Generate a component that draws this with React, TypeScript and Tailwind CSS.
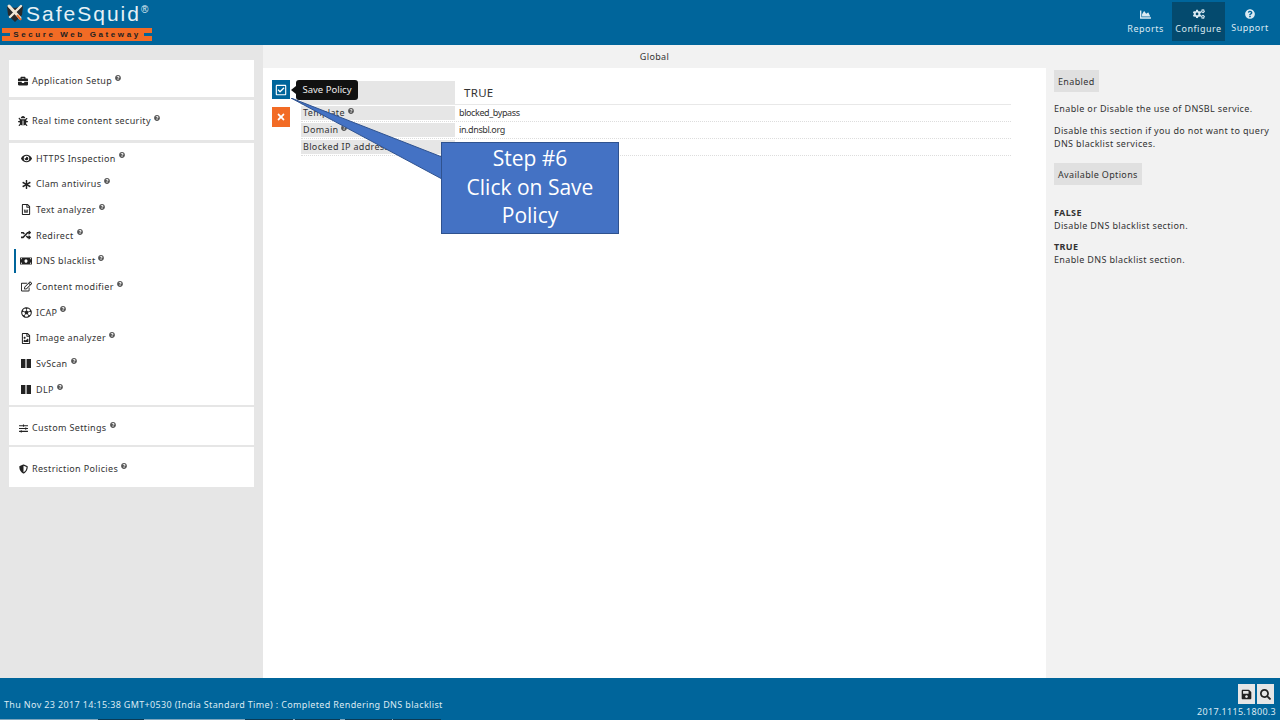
import type { ReactNode } from "react";
import {
  FaBriefcase,
  FaBug,
  FaEye,
  FaAsterisk,
  FaRegFileWord,
  FaRandom,
  FaMoneyBill,
  FaRegEdit,
  FaRegFutbol,
  FaRegFileImage,
  FaSlidersH,
  FaShieldAlt,
  FaChartArea,
  FaCogs,
  FaQuestionCircle,
  FaSave,
  FaSearch,
  FaRegCheckSquare,
  FaTimes,
} from "react-icons/fa";

const font = "font-['Noto_Sans',sans-serif]";

function Info({ className = "" }: { className?: string }) {
  return <FaQuestionCircle className={`inline-block w-[6px] h-[6px] shrink-0 text-[#555] ${className}`} />;
}

function Bars() {
  return (
    <svg viewBox="0 0 10 9" className="w-[10px] h-[9px] fill-[#222]">
      <rect x="0" y="0" width="4.4" height="9" />
      <rect x="5.6" y="0" width="4.4" height="9" />
    </svg>
  );
}

const subItems: { label: string; icon: ReactNode; active?: boolean }[] = [
  { label: "HTTPS Inspection", icon: <FaEye className="w-[11px] h-[11px]" /> },
  { label: "Clam antivirus", icon: <FaAsterisk className="w-[9px] h-[9px]" /> },
  { label: "Text analyzer", icon: <FaRegFileWord className="w-[10px] h-[11px]" /> },
  { label: "Redirect", icon: <FaRandom className="w-[10px] h-[10px]" /> },
  { label: "DNS blacklist", icon: <FaMoneyBill className="w-[12px] h-[12px]" />, active: true },
  { label: "Content modifier", icon: <FaRegEdit className="w-[11px] h-[11px]" /> },
  { label: "ICAP", icon: <FaRegFutbol className="w-[11px] h-[11px]" /> },
  { label: "Image analyzer", icon: <FaRegFileImage className="w-[10px] h-[11px]" /> },
  { label: "SvScan", icon: <Bars /> },
  { label: "DLP", icon: <Bars /> },
];

function TopCard({ icon, label, className }: { icon: ReactNode; label: string; className: string }) {
  return (
    <div className={`bg-white flex items-center pl-[9px] text-[#333] ${className}`}>
      <span className="w-[10px] flex justify-center text-[#222]">{icon}</span>
      <span className="ml-[4px] text-[9px] tracking-[0.35px]">{label}</span>
      <Info className="ml-[3px] -mt-[6px]" />
    </div>
  );
}

function NavButton({ icon, label, active, className = "" }: { icon: ReactNode; label: string; active?: boolean; className?: string }) {
  return (
    <div className={`h-[39px] flex flex-col items-center justify-center gap-[3px] text-[#dbeaf3] ${active ? "bg-[#044a6e]" : ""} ${className}`}>
      {icon}
      <span className="text-[9px] tracking-[0.5px] leading-[12px]">{label}</span>
    </div>
  );
}

const rows = [
  { label: "Template", value: "blocked_bypass" },
  { label: "Domain", value: "in.dnsbl.org" },
  { label: "Blocked IP address", value: "" },
];

export default function App() {
  return (
    <div className={`relative w-[1280px] h-[720px] overflow-hidden flex flex-col bg-white ${font}`}>
      <header className="h-[45px] shrink-0 bg-[#00659b] flex justify-between pr-[5px]">
        <div className="w-[152px] pl-[2px]">
          <div className="flex items-center h-[28px]">
            <svg viewBox="0 0 20 20" className="w-[20px] h-[20px] shrink-0 ml-[3px] -mt-[2px]">
              <path d="M2 3 L10 5 L18 3 L17 12 L10 19 L3 12 Z" fill="#2a2a2a" />
              <path d="M4 3 L15 15" stroke="#f1e8d8" strokeWidth="3" strokeLinecap="round" />
              <path d="M16 3 L5 14" stroke="#f1e8d8" strokeWidth="2.4" strokeLinecap="round" />
              <path d="M12 12 L16 17" stroke="#f26b25" strokeWidth="2" />
            </svg>
            <span className="ml-[1px] -mt-[2px] text-[#e6f1f6] text-[21px] tracking-[2px] font-['Liberation_Sans',sans-serif] leading-none whitespace-nowrap">
              SafeSquid
              <sup className="text-[10px] tracking-normal -top-[8px]">®</sup>
            </span>
          </div>
          <div className="h-[13px] bg-[#f26b25] flex items-center justify-between text-[8px] font-bold tracking-[2.6px] text-[#222] font-['Liberation_Sans',sans-serif]">
            <span className="w-[8px] h-[3px] bg-[#00659b]" />
            Secure Web Gateway
            <span className="w-[8px] h-[3px] bg-[#00659b]" />
          </div>
        </div>
        <nav className="flex items-start pt-[2px]">
          <NavButton icon={<FaChartArea className="w-[11px] h-[11px]" />} label="Reports" className="w-[53px]" />
          <NavButton icon={<FaCogs className="w-[12px] h-[12px]" />} label="Configure" active className="w-[53px]" />
          <NavButton icon={<FaQuestionCircle className="w-[10px] h-[10px]" />} label="Support" className="w-[50px]" />
        </nav>
      </header>

      <div className="flex-1 flex min-h-0">
        <aside className="w-[263px] shrink-0 bg-[#e6e6e6] pt-[15px] pl-[9px]">
          <div className="w-[245px] flex flex-col">
            <TopCard icon={<FaBriefcase className="w-[10px] h-[10px]" />} label="Application Setup" className="h-[37px] pt-[4px]" />
            <TopCard icon={<FaBug className="w-[10px] h-[10px]" />} label="Real time content security" className="h-[40px] mt-[3px] pt-[1px]" />
            <div className="bg-white mt-[3px] h-[262px] pt-[2px] flex flex-col">
              {subItems.map((item) => (
                <div key={item.label} className="relative h-[25.7px] shrink-0 flex items-center pt-[1px] pl-[11px] text-[#333]">
                  {item.active && <span className="absolute left-[5px] top-[1px] bottom-[0px] w-[2px] bg-[#00659b]" />}
                  <span className="w-[12px] flex justify-center text-[#222]">{item.icon}</span>
                  <span className="ml-[4px] text-[9px] tracking-[0.35px]">{item.label}</span>
                  <Info className="ml-[3px] -mt-[6px]" />
                </div>
              ))}
            </div>
            <TopCard icon={<FaSlidersH className="w-[9px] h-[9px]" />} label="Custom Settings" className="h-[38px] mt-[2px] pt-[4px]" />
            <TopCard icon={<FaShieldAlt className="w-[9px] h-[10px]" />} label="Restriction Policies" className="h-[40px] mt-[2px] pt-[3px]" />
          </div>
        </aside>

        <div className="flex-1 flex flex-col min-w-0">
          <div className="h-[23px] shrink-0 bg-[#f2f2f2] flex items-center justify-center pr-[234px] pt-[1px] text-[9px] tracking-[0.35px] text-[#333]">
            Global
          </div>
          <div className="flex-1 flex min-h-0">
            <main className="w-[783px] bg-white pt-[12px] pl-[9px] flex gap-[11px]">
              <div className="flex flex-col gap-[8px]">
                <button className="w-[18px] h-[19px] bg-[#00659b] flex items-center justify-center">
                  <FaRegCheckSquare className="w-[12px] h-[12px] text-white" />
                </button>
                <button className="w-[18px] h-[20px] bg-[#f26b25] flex items-center justify-center">
                  <FaTimes className="w-[10px] h-[10px] text-white" />
                </button>
              </div>
              <div className="w-[710px] text-[9px] text-[#333] pt-[1px]">
                <div className="flex h-[24px] border-b border-[#e8e8e8]">
                  <div className="w-[154px] bg-[#e6e6e6]" />
                  <div className="pl-[9px] pt-[5px] text-[11.5px] tracking-[0.3px] leading-[14px]">TRUE</div>
                </div>
                {rows.map((row) => (
                  <div key={row.label} className="flex h-[17px] items-center border-b border-dotted border-[#ddd]">
                    <div className="w-[154px] h-[14px] bg-[#e6e6e6] pl-[2px] flex items-center tracking-[0.35px]">
                      {row.label}
                      <Info className="ml-[3px] -mt-[4px]" />
                    </div>
                    <div className="pl-[4px] tracking-[-0.4px]">{row.value}</div>
                  </div>
                ))}
              </div>
            </main>
            <aside className="flex-1 bg-[#f2f2f2] pl-[8px] pr-[4px] pt-[2px] text-[9px] tracking-[0.35px] text-[#333] leading-[13px]">
              <div className="inline-block bg-[#e0e0e0] px-[4px] py-[4.5px]">Enabled</div>
              <p className="mt-[10px]">Enable or Disable the use of DNSBL service.</p>
              <p className="mt-[9px]">Disable this section if you do not want to query DNS blacklist services.</p>
              <div className="inline-block bg-[#e0e0e0] px-[4px] py-[4.5px] mt-[13px]">Available Options</div>
              <p className="mt-[21px]"><b className="block">FALSE</b>Disable DNS blacklist section.</p>
              <p className="mt-[8px]"><b className="block">TRUE</b>Enable DNS blacklist section.</p>
            </aside>
          </div>
        </div>
      </div>

      <footer className="h-[41px] shrink-0 bg-[#00659b] flex justify-between items-end pb-[8px] pl-[4px] pr-[4px] text-[#dbeaf3] text-[9px] tracking-[0.35px]">
        <span>Thu Nov 23 2017 14:15:38 GMT+0530 (India Standard Time) : Completed Rendering DNS blacklist</span>
        <div className="flex flex-col items-end -mb-[6px]">
          <div className="flex gap-[2px] mb-[2px] mr-[2px]">
            <span className="w-[17px] h-[20px] bg-[#e6e6e6] flex items-center justify-center"><FaSave className="w-[11px] h-[11px] text-[#222]" /></span>
            <span className="w-[17px] h-[20px] bg-[#e6e6e6] flex items-center justify-center"><FaSearch className="w-[11px] h-[11px] text-[#222]" /></span>
          </div>
          <span className="leading-[11px] tracking-[0.3px]">2017.1115.1800.3</span>
        </div>
      </footer>
      <div className="h-[1px] shrink-0 bg-[#00659b] flex">
        <span className="w-[98px] bg-[#7fa6bd]" />
        <span className="w-[46px] bg-[#0b3a55]" />
        <span className="w-[101px] bg-[#7fa6bd]" />
        <span className="w-[48px] bg-[#0b3a55]" />
        <span className="w-[2px] bg-[#7fa6bd]" />
        <span className="w-[45px] bg-[#0b3a55]" />
        <span className="w-[5px] bg-[#7fa6bd]" />
        <span className="w-[47px] bg-[#0b3a55]" />
        <span className="w-[1px] bg-[#7fa6bd]" />
        <span className="w-[48px] bg-[#0b3a55]" />
      </div>

      {/* tooltip and step callout sit over the form */}
      <div className="absolute left-[296px] top-[80px] w-[62px] h-[20px] bg-[#111] rounded-[3px] flex items-center justify-center text-[#eee] text-[9.5px]">
        Save Policy
      </div>
      <div className="absolute left-[291px] top-[86px] w-0 h-0 border-y-[4px] border-y-transparent border-r-[5px] border-r-[#111]" />
      <svg className="absolute left-[290px] top-[98px] pointer-events-none" width="153" height="84" viewBox="0 0 153 84">
        <path d="M1 0 L152 59 L152 81 Z" fill="#4472c4" stroke="#2f528f" strokeWidth="1" />
      </svg>
      <div className="absolute left-[441px] top-[142px] w-[178px] h-[92px] bg-[#4472c4] border border-[#2f528f] flex items-center justify-center text-center text-white text-[21px] leading-[28.5px] font-['Open_Sans',sans-serif] pb-[2px]">
        <span>Step #6<br />Click on Save<br />Policy</span>
      </div>
    </div>
  );
}
